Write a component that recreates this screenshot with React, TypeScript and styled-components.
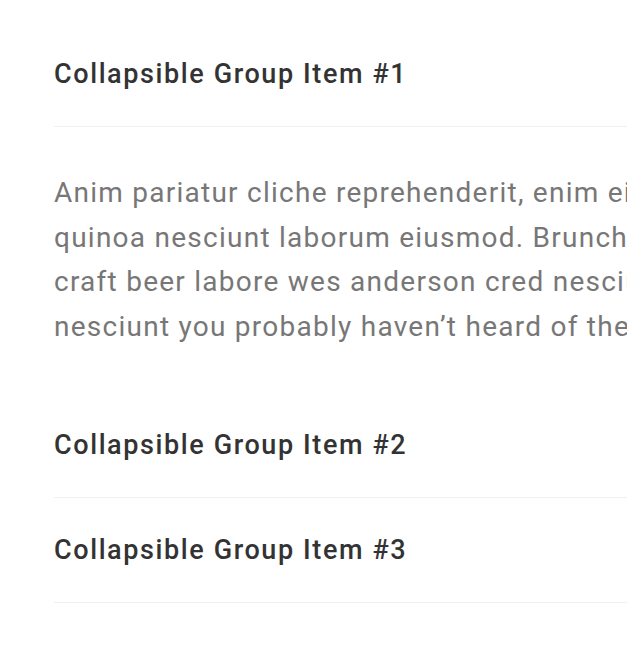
import React from "react";
import styled, { createGlobalStyle } from "styled-components";

const Global = createGlobalStyle`
  html, body { margin: 0; padding: 0; background: #fff; overflow: hidden; }
  body { font-family: Roboto, "Noto Sans", "Liberation Sans", sans-serif; }
`;

const Page = styled.div`
  width: 627px;
  height: 653px;
  overflow: hidden;
  padding: 22px 0 0 54px;
  box-sizing: border-box;
`;

const Accordion = styled.div`
  width: 1500px;
  display: flex;
  flex-direction: column;
`;

const Header = styled.div`
  height: 104px;
  display: flex;
  align-items: center;
  border-bottom: 1px solid #f0f0f0;
  font-size: 27px;
  letter-spacing: 1.6px;
  font-weight: 500;
  color: #333;
  white-space: nowrap;
`;

const Panel = styled.div`
  padding: 44px 0 44px;
  font-size: 28px;
  letter-spacing: 1.25px;
  line-height: 44.5px;
  color: #777;
  white-space: nowrap;
`;

const items = [
  { title: "Collapsible Group Item #1", open: true },
  { title: "Collapsible Group Item #2", open: false },
  { title: "Collapsible Group Item #3", open: false },
];

const lines = [
  "Anim pariatur cliche reprehenderit, enim eiusmod high life accusamus terry richardson ad squid. 3 wolf moon officia aute, non cupidatat skateboard dolor brunch. Food truck",
  "quinoa nesciunt laborum eiusmod. Brunch 3 wolf moon tempor, sunt aliqua put a bird on it squid single-origin coffee nulla assumenda shoreditch et. Nihil anim keffiyeh helvetica,",
  "craft beer labore wes anderson cred nesciunt sapiente ea proident. Ad vegan excepteur butcher vice lomo. Leggings occaecat craft beer farm-to-table, raw denim aesthetic synth",
  "nesciunt you probably haven\u2019t heard of them accusamus labore sustainable VHS.",
];

export default function App() {
  return (
    <>
      <Global />
      <Page>
        <Accordion>
          {items.map((it) => (
            <React.Fragment key={it.title}>
              <Header>{it.title}</Header>
              {it.open && (
                <Panel>
                  {lines.map((l) => (
                    <div key={l}>{l}</div>
                  ))}
                </Panel>
              )}
            </React.Fragment>
          ))}
        </Accordion>
      </Page>
    </>
  );
}
